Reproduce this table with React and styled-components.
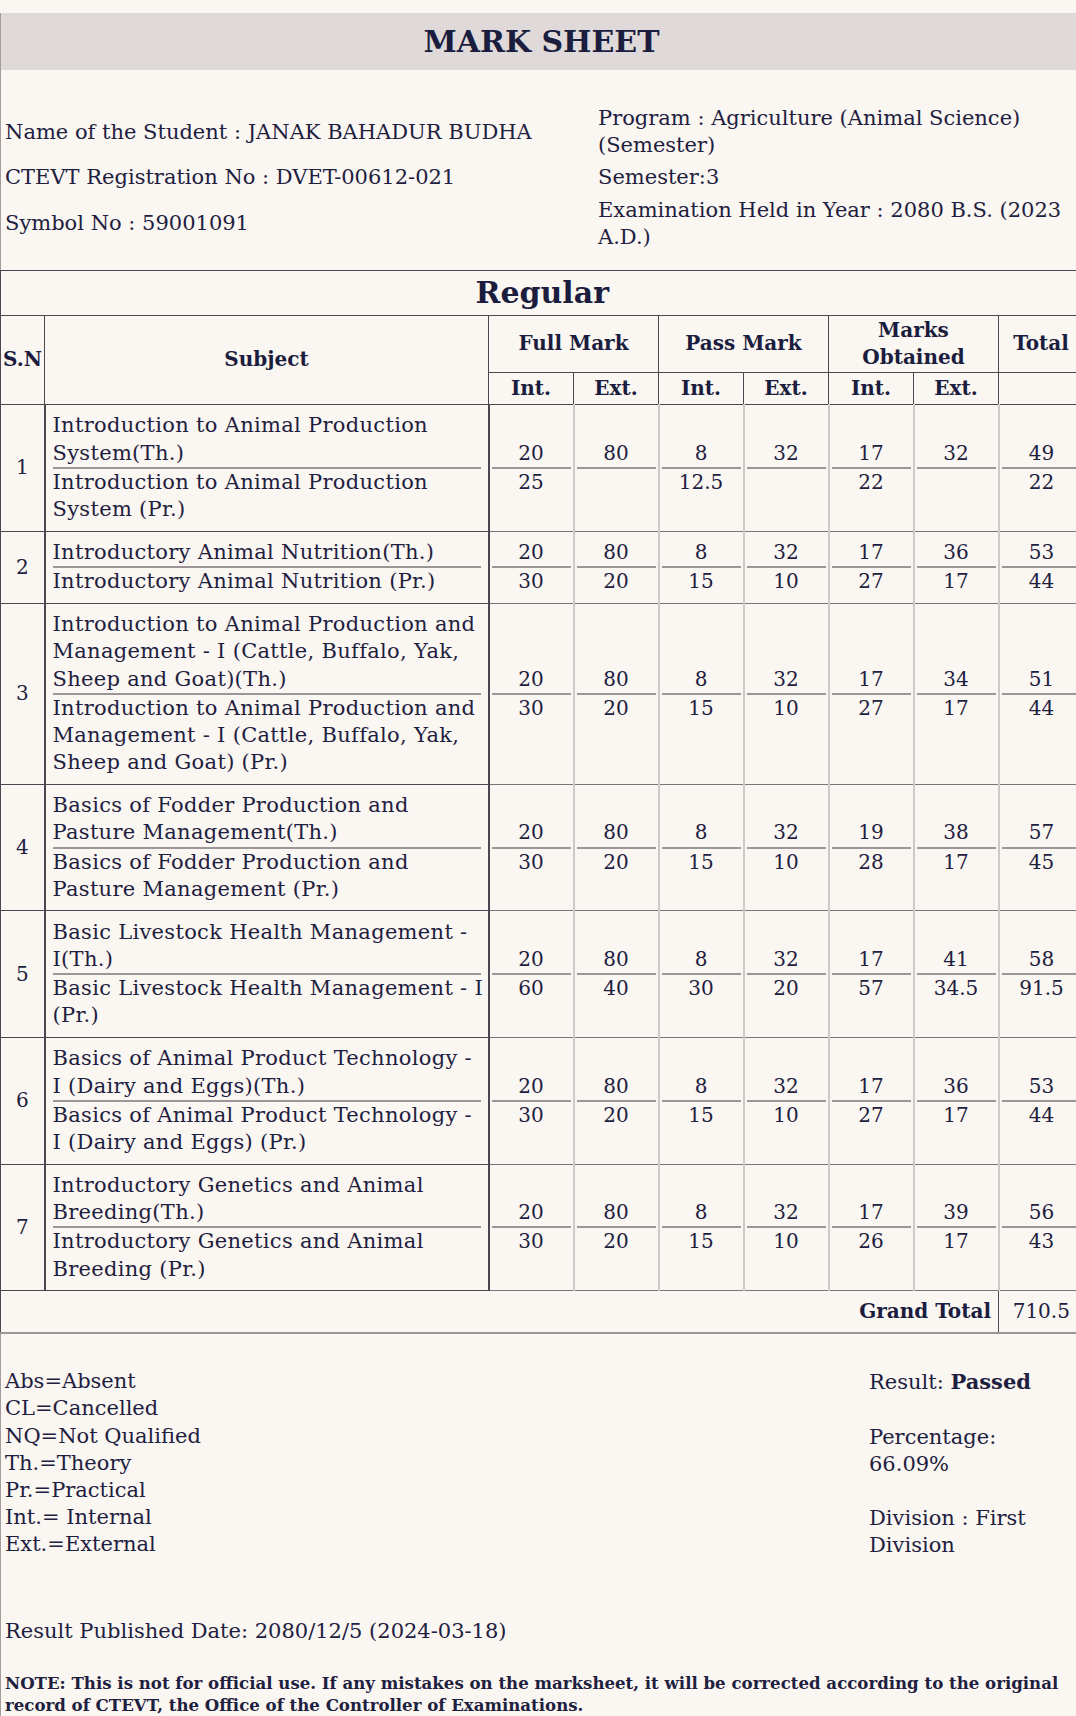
import React from "react";
import styled, { createGlobalStyle } from "styled-components";

const GlobalStyle = createGlobalStyle`
  html, body {
    margin: 0;
    padding: 0;
    background: #faf6f1;
    overflow: hidden;
  }
  body {
    font-family: "DejaVu Serif", "Liberation Serif", serif;
    color: #1e2040;
  }
`;

const DARK = "#4b4650";
const LIGHT = "#cfc9c7";
const SEP = "#9d9698";

const subjects = [
  {
    sn: 1,
    th: ["Introduction to Animal Production", "System(Th.)"],
    pr: ["Introduction to Animal Production", "System (Pr.)"],
    a: ["20", "80", "8", "32", "17", "32", "49"],
    b: ["25", "", "12.5", "", "22", "", "22"],
  },
  {
    sn: 2,
    th: ["Introductory Animal Nutrition(Th.)"],
    pr: ["Introductory Animal Nutrition (Pr.)"],
    a: ["20", "80", "8", "32", "17", "36", "53"],
    b: ["30", "20", "15", "10", "27", "17", "44"],
  },
  {
    sn: 3,
    th: [
      "Introduction to Animal Production and",
      "Management - I (Cattle, Buffalo, Yak,",
      "Sheep and Goat)(Th.)",
    ],
    pr: [
      "Introduction to Animal Production and",
      "Management - I (Cattle, Buffalo, Yak,",
      "Sheep and Goat) (Pr.)",
    ],
    a: ["20", "80", "8", "32", "17", "34", "51"],
    b: ["30", "20", "15", "10", "27", "17", "44"],
  },
  {
    sn: 4,
    th: ["Basics of Fodder Production and", "Pasture Management(Th.)"],
    pr: ["Basics of Fodder Production and", "Pasture Management (Pr.)"],
    a: ["20", "80", "8", "32", "19", "38", "57"],
    b: ["30", "20", "15", "10", "28", "17", "45"],
  },
  {
    sn: 5,
    th: ["Basic Livestock Health Management -", "I(Th.)"],
    pr: ["Basic Livestock Health Management - I", "(Pr.)"],
    a: ["20", "80", "8", "32", "17", "41", "58"],
    b: ["60", "40", "30", "20", "57", "34.5", "91.5"],
  },
  {
    sn: 6,
    th: ["Basics of Animal Product Technology -", "I (Dairy and Eggs)(Th.)"],
    pr: ["Basics of Animal Product Technology -", "I (Dairy and Eggs) (Pr.)"],
    a: ["20", "80", "8", "32", "17", "36", "53"],
    b: ["30", "20", "15", "10", "27", "17", "44"],
  },
  {
    sn: 7,
    th: ["Introductory Genetics and Animal", "Breeding(Th.)"],
    pr: ["Introductory Genetics and Animal", "Breeding (Pr.)"],
    a: ["20", "80", "8", "32", "17", "39", "56"],
    b: ["30", "20", "15", "10", "26", "17", "43"],
  },
];

const Sheet = styled.div`
  width: 1082px;
  margin-top: 13px;
`;

const TitleBar = styled.header`
  height: 57px;
  display: flex;
  align-items: center;
  justify-content: center;
  background: #dfdad9;
  border-left: 1px solid #a29c9c;
`;

const Title = styled.h1`
  margin: 0;
  font-size: 30px;
  font-weight: 700;
  color: #1b1d3e;
`;

const Info = styled.section`
  display: grid;
  grid-template-columns: 593px 1fr;
  row-gap: 5px;
  align-items: center;
  padding: 35px 0 19px 4px;
  font-size: 21px;
  line-height: 27.2px;
  border-left: 1px solid #a29c9c;
`;

const InfoItem = styled.div`
  white-space: nowrap;
`;

const Table = styled.table`
  width: 1083px;
  border-collapse: collapse;
  table-layout: fixed;
  font-size: 20px;
  line-height: 27.2px;
`;

const Caption = styled.th`
  height: 44px;
  padding: 0;
  font-size: 30px;
  font-weight: 700;
  text-align: center;
  border-top: 1px solid ${DARK};
  border-left: 1px solid ${DARK};
  color: #1b1d3e;
`;

const Head = styled.th`
  height: ${(p) => p.h || "auto"};
  padding: 0;
  font-weight: 700;
  text-align: center;
  vertical-align: middle;
  border: 1px solid ${DARK};
  color: #1b1d3e;
`;

const SnCell = styled.td`
  padding: 0;
  text-align: center;
  vertical-align: middle;
  border: 1px solid ${DARK};
  border-right: 2px solid ${DARK};
`;

const SubjectCell = styled.td`
  padding: 7.4px 7px;
  vertical-align: middle;
  font-size: 21px;
  letter-spacing: 0.3px;
  white-space: nowrap;
  border-bottom: 1px solid ${DARK};
  border-right: 2px solid ${DARK};
`;

const SubjectPart = styled.div`
  border-bottom: ${(p) => (p.top ? `2px solid ${SEP}` : "none")};
`;

const NumCell = styled.td`
  padding: 0 2px;
  text-align: center;
  vertical-align: middle;
  border-left: 2px solid ${LIGHT};
  border-bottom: 1px solid #7a7479;
`;

const NumPart = styled.div`
  height: 27.2px;
  border-bottom: ${(p) => (p.top ? `2px solid ${SEP}` : "none")};
`;

const TotalLabel = styled.td`
  height: 41px;
  padding: 0 7px 0 0;
  text-align: right;
  font-weight: 700;
  border-left: 1px solid ${DARK};
  border-bottom: 2px solid ${SEP};
  color: #1b1d3e;
`;

const TotalValue = styled.td`
  padding: 0;
  text-align: center;
  border-left: 1px solid ${DARK};
  border-bottom: 2px solid ${SEP};
`;

const Footer = styled.footer`
  padding: 34px 0 0 4px;
  font-size: 21px;
  line-height: 27.2px;
  border-left: 1px solid #a29c9c;
`;

const Legend = styled.div`
  display: grid;
  grid-template-columns: 864px 185px;
`;

const Line = styled.div`
  margin-bottom: ${(p) => (p.gap ? "27.2px" : "0")};
`;

const Published = styled.div`
  margin-top: 58px;
`;

const Note = styled.p`
  margin: 27px 0 0;
  padding-bottom: 10px;
  font-size: 16.6px;
  line-height: 22px;
  font-weight: 700;
  white-space: nowrap;
`;

const Lines = ({ items }) =>
  items.map((t, i) => (
    <React.Fragment key={i}>
      {i > 0 && <br />}
      {t}
    </React.Fragment>
  ));

const SubjectRow = ({ row }) => (
  <tr>
    <SnCell>{row.sn}</SnCell>
    <SubjectCell>
      <SubjectPart top>
        <Lines items={row.th} />
      </SubjectPart>
      <SubjectPart>
        <Lines items={row.pr} />
      </SubjectPart>
    </SubjectCell>
    {row.a.map((v, i) => (
      <NumCell key={i}>
        <NumPart top>{v}</NumPart>
        <NumPart>{row.b[i]}</NumPart>
      </NumCell>
    ))}
  </tr>
);

export default function App() {
  return (
    <>
      <GlobalStyle />
      <Sheet>
        <TitleBar>
          <Title>MARK SHEET</Title>
        </TitleBar>
        <Info>
          <InfoItem>Name of the Student : JANAK BAHADUR BUDHA</InfoItem>
          <InfoItem>
            Program : Agriculture (Animal Science)
            <br />
            (Semester)
          </InfoItem>
          <InfoItem>CTEVT Registration No : DVET-00612-021</InfoItem>
          <InfoItem>Semester:3</InfoItem>
          <InfoItem>Symbol No : 59001091</InfoItem>
          <InfoItem>
            Examination Held in Year : 2080 B.S. (2023
            <br />
            A.D.)
          </InfoItem>
        </Info>
        <Table>
          <colgroup>
            <col style={{ width: 44 }} />
            <col style={{ width: 444 }} />
            {Array.from({ length: 7 }).map((_, i) => (
              <col key={i} style={{ width: 85 }} />
            ))}
          </colgroup>
          <thead>
            <tr>
              <Caption colSpan={9}>Regular</Caption>
            </tr>
            <tr>
              <Head rowSpan={2}>S.N</Head>
              <Head rowSpan={2}>Subject</Head>
              <Head colSpan={2} h="56px">Full Mark</Head>
              <Head colSpan={2}>Pass Mark</Head>
              <Head colSpan={2}>
                Marks
                <br />
                Obtained
              </Head>
              <Head>Total</Head>
            </tr>
            <tr>
              <Head h="31px">Int.</Head>
              <Head>Ext.</Head>
              <Head>Int.</Head>
              <Head>Ext.</Head>
              <Head>Int.</Head>
              <Head>Ext.</Head>
              <Head />
            </tr>
          </thead>
          <tbody>
            {subjects.map((row) => (
              <SubjectRow key={row.sn} row={row} />
            ))}
            <tr>
              <TotalLabel colSpan={8}>Grand Total</TotalLabel>
              <TotalValue>710.5</TotalValue>
            </tr>
          </tbody>
        </Table>
        <Footer>
          <Legend>
            <div>
              <Line>Abs=Absent</Line>
              <Line>CL=Cancelled</Line>
              <Line>NQ=Not Qualified</Line>
              <Line>Th.=Theory</Line>
              <Line>Pr.=Practical</Line>
              <Line>Int.= Internal</Line>
              <Line>Ext.=External</Line>
            </div>
            <div>
              <Line gap>
                Result: <b>Passed</b>
              </Line>
              <Line gap>
                Percentage:
                <br />
                66.09%
              </Line>
              <Line>
                Division : First
                <br />
                Division
              </Line>
            </div>
          </Legend>
          <Published>Result Published Date: 2080/12/5 (2024-03-18)</Published>
          <Note>
            NOTE: This is not for official use. If any mistakes on the marksheet, it will be corrected according to the original
            <br />
            record of CTEVT, the Office of the Controller of Examinations.
          </Note>
        </Footer>
      </Sheet>
    </>
  );
}
